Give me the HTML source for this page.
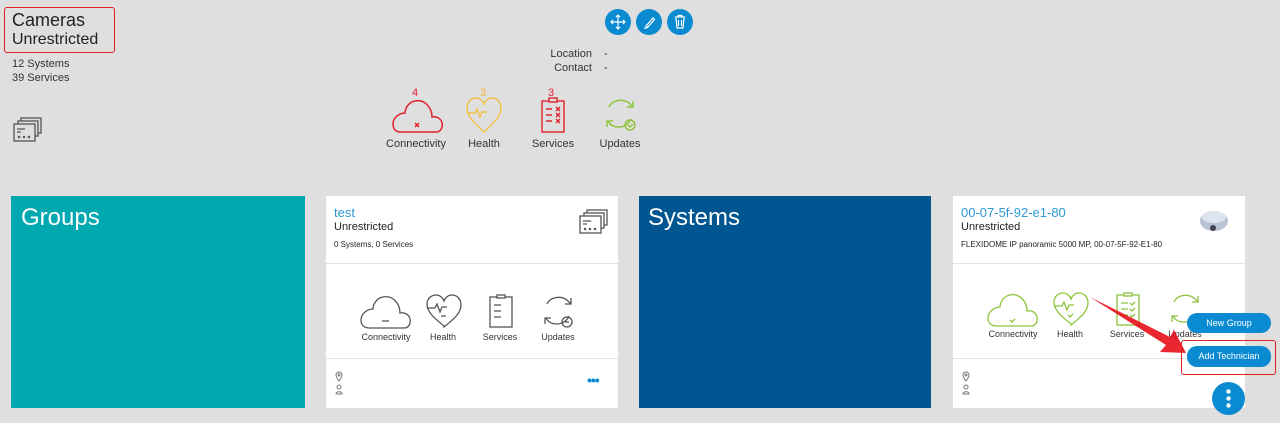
<!DOCTYPE html>
<html><head><meta charset="utf-8"><style>
*{margin:0;padding:0;box-sizing:border-box}
body{width:1280px;height:423px;background:#dfdfdf;font-family:"Liberation Sans",sans-serif;position:relative;overflow:hidden;color:#222}
.a{position:absolute}
.card{position:absolute;top:196px;height:212px;background:#fff}
.lbl{position:absolute;font-size:10px;color:#333;text-align:center;width:80px}
.btn{position:absolute;border-radius:50%;background:#0a8bd1;width:26px;height:26px;top:9px}
.hr{position:absolute;left:0;right:0;height:1px;background:#e2e2e2}
</style></head><body>
<div class="a" style="left:4px;top:7px;width:111px;height:46px;border:1.5px solid #e02020;border-radius:3px"></div>
<div class="a" style="left:12px;top:10px;font-size:18px;color:#222">Cameras</div>
<div class="a" style="left:12px;top:31px;font-size:16px;color:#222">Unrestricted</div>
<div class="a" style="left:12px;top:57px;font-size:11px;line-height:14px;color:#333">12 Systems<br>39 Services</div>
<svg class="a" style="left:13px;top:117px" width="30" height="26" viewBox="0 0 30 26" fill="none" stroke="#555" stroke-width="1.3"><rect x="8" y="1" width="20" height="15"/><rect x="5" y="4" width="20" height="15" fill="#dfdfdf"/><rect x="1" y="7" width="21" height="17" fill="#dfdfdf"/><path d="M4 12h8M4 15h4"/><circle cx="6" cy="20" r=".6"/><circle cx="11" cy="20" r=".6"/><circle cx="16" cy="20" r=".6"/></svg>

<div class="btn" style="left:605px"><svg width="26" height="26" viewBox="0 0 26 26" fill="none" stroke="#fff" stroke-width="1.2"><path d="M13 6v14M6 13h14M11 8l2-2 2 2M11 18l2 2 2-2M8 11l-2 2 2 2M18 11l2 2-2 2"/></svg></div>
<div class="btn" style="left:636px"><svg width="26" height="26" viewBox="0 0 26 26" fill="none" stroke="#fff" stroke-width="1.2"><path d="M10 17l7-8 1.5 1.5-7 8zM8 19h3"/></svg></div>
<div class="btn" style="left:667px"><svg width="26" height="26" viewBox="0 0 26 26" fill="none" stroke="#fff" stroke-width="1.2"><path d="M8 8h10M11 8V6.5h4V8M9 9l1 10h6l1-10M11.5 11v6M14.5 11v6"/></svg></div>

<div class="a" style="left:520px;top:47px;width:72px;text-align:right;font-size:11px;line-height:14px;color:#333">Location<br>Contact</div>
<div class="a" style="left:604px;top:47px;font-size:11px;line-height:14px;color:#333">-<br>-</div>

<div class="a" style="left:412px;top:87px;font-size:11px;color:#e0202c">4</div>
<svg class="a" style="left:390px;top:97px" width="54" height="37" viewBox="0 0 54 37" fill="none" stroke="#e0202c" stroke-width="1.5"><path d="M10 35h36c5 0 7-5 6-9-1-5-6-7-10-6 0-10-8-18-17-16-6 1-10 7-10 12-6 0-12 5-12 11 0 5 3 8 7 8z"/><path d="M25 26l4 4M29 26l-4 4"/></svg>
<div class="lbl" style="left:376px;top:138px;font-size:11px">Connectivity</div>

<div class="a" style="left:480px;top:87px;font-size:11px;color:#f0b93a">3</div>
<svg class="a" style="left:466px;top:97px" width="36" height="38" viewBox="0 0 36 38" fill="none" stroke="#f0c040" stroke-width="1.4"><path d="M18 35C8 26 1 19 1 11 1 5 5 1 10 1c4 0 7 3 8 6 1-3 4-6 8-6 5 0 9 4 9 10 0 8-7 15-17 24z"/><path d="M1 16h8l2-4 3 8 2-5h5"/></svg>
<div class="lbl" style="left:444px;top:138px;font-size:11px">Health</div>

<div class="a" style="left:548px;top:87px;font-size:11px;color:#e0202c">3</div>
<svg class="a" style="left:540px;top:97px" width="26" height="36" viewBox="0 0 26 36" fill="none" stroke="#e0202c" stroke-width="1.4"><rect x="2" y="4" width="22" height="31"/><rect x="9" y="1" width="8" height="4" fill="#dfdfdf"/><path d="M6 12h6M6 18h6M6 24h6M16 10l4 4M20 10l-4 4M16 16l4 4M20 16l-4 4M16 22l4 4M20 22l-4 4"/></svg>
<div class="lbl" style="left:513px;top:138px;font-size:11px">Services</div>

<svg class="a" style="left:602px;top:97px" width="36" height="36" viewBox="0 0 36 36" fill="none" stroke="#8cc43c" stroke-width="1.4"><path d="M7 10c4-8 16-9 22-2l2 2M31 4v6h-6M29 22c-2 5-7 8-12 8-5 0-9-2-11-6M5 30v-6h6"/><circle cx="28" cy="28" r="5"/><path d="M26 28l2 2 3-3"/></svg>
<div class="lbl" style="left:580px;top:138px;font-size:11px">Updates</div>

<div class="card" style="left:11px;width:294px;background:#00a8b0"><div class="a" style="left:10px;top:8px;font-size:24px;color:#fff">Groups</div></div>
<div class="card" style="left:639px;width:292px;background:#005691"><div class="a" style="left:9px;top:8px;font-size:24px;color:#fff">Systems</div></div>

<div class="card" style="left:326px;width:292px">
 <div class="a" style="left:8px;top:9px;font-size:13px;color:#2f9ad6">test</div>
 <div class="a" style="left:8px;top:25px;font-size:11px;color:#222">Unrestricted</div>
 <div class="a" style="left:8px;top:44px;font-size:8px;color:#222">0 Systems, 0 Services</div>
 <svg class="a" style="left:253px;top:13px" width="30" height="26" viewBox="0 0 30 26" fill="none" stroke="#555" stroke-width="1.3"><rect x="8" y="1" width="20" height="15"/><rect x="5" y="4" width="20" height="15" fill="#fff"/><rect x="1" y="7" width="21" height="17" fill="#fff"/><path d="M4 12h8M4 15h4"/><circle cx="6" cy="20" r=".6"/><circle cx="11" cy="20" r=".6"/><circle cx="16" cy="20" r=".6"/></svg>
 <div class="hr" style="top:67px"></div>
 <svg class="a" style="left:34px;top:98px" width="52" height="36" viewBox="0 0 52 36" fill="none" stroke="#555" stroke-width="1.3"><path d="M10 34h34c5 0 7-5 6-9-1-5-6-7-10-6 0-10-8-18-17-16-6 1-10 7-10 12-6 0-12 5-12 11 0 5 3 8 9 8z"/><path d="M22 27h7"/></svg>
 <div class="lbl" style="left:20px;top:136px;font-size:9px">Connectivity</div>
 <svg class="a" style="left:100px;top:98px" width="36" height="34" viewBox="0 0 36 34" fill="none" stroke="#555" stroke-width="1.3"><path d="M18 32C8 24 1 18 1 10 1 5 5 1 10 1c4 0 7 3 8 6 1-3 4-6 8-6 5 0 9 4 9 10 0 8-7 14-17 22z"/><path d="M1 14h8l2-4 3 8 2-5h5M15 22h5"/></svg>
 <div class="lbl" style="left:77px;top:136px;font-size:9px">Health</div>
 <svg class="a" style="left:162px;top:98px" width="26" height="34" viewBox="0 0 26 34" fill="none" stroke="#555" stroke-width="1.3"><rect x="2" y="3" width="22" height="30"/><rect x="9" y="1" width="8" height="3" fill="#fff"/><path d="M6 11h7M6 17h7M6 23h7"/></svg>
 <div class="lbl" style="left:134px;top:136px;font-size:9px">Services</div>
 <svg class="a" style="left:214px;top:98px" width="36" height="36" viewBox="0 0 36 36" fill="none" stroke="#555" stroke-width="1.3"><path d="M7 10c4-8 16-9 22-2l2 2M31 4v6h-6M29 22c-2 5-7 8-12 8-5 0-9-2-11-6M5 30v-6h6"/><circle cx="27" cy="28" r="5"/><path d="M25 28h4"/></svg>
 <div class="lbl" style="left:192px;top:136px;font-size:9px">Updates</div>
 <div class="hr" style="top:162px"></div>
 <svg class="a" style="left:9px;top:175px" width="8" height="24" viewBox="0 0 8 24" fill="none" stroke="#777" stroke-width="1"><path d="M4 10C1 6 1 5 1 4a3 3 0 016 0c0 1 0 2-3 6z"/><circle cx="4" cy="4" r="1"/><circle cx="4" cy="16" r="2"/><path d="M1 23c0-3 6-3 6 0z"/></svg>
 <div class="a" style="left:261px;top:176px;font-size:14px;color:#0a8bd1;letter-spacing:-1px;font-weight:bold">•••</div>
</div>

<div class="card" style="left:953px;width:292px">
 <div class="a" style="left:8px;top:9px;font-size:13px;color:#2f9ad6">00-07-5f-92-e1-80</div>
 <div class="a" style="left:8px;top:25px;font-size:11px;color:#222">Unrestricted</div>
 <div class="a" style="left:8px;top:44px;font-size:8px;color:#222">FLEXIDOME IP panoramic 5000 MP, 00-07-5F-92-E1-80</div>
 <svg class="a" style="left:245px;top:12px" width="32" height="26" viewBox="0 0 32 26"><ellipse cx="16" cy="13" rx="14" ry="10" fill="#b8c4d4"/><ellipse cx="16" cy="9" rx="12" ry="6" fill="#dde4ee"/><circle cx="15" cy="20" r="3" fill="#445"/></svg>
 <div class="hr" style="top:67px"></div>
 <svg class="a" style="left:34px;top:96px" width="52" height="36" viewBox="0 0 52 36" fill="none" stroke="#8cc43c" stroke-width="1.3"><path d="M10 34h34c5 0 7-5 6-9-1-5-6-7-10-6 0-10-8-18-17-16-6 1-10 7-10 12-6 0-12 5-12 11 0 5 3 8 9 8z"/><path d="M23 28l2 2 3-3"/></svg>
 <div class="lbl" style="left:20px;top:133px;font-size:9px">Connectivity</div>
 <svg class="a" style="left:100px;top:96px" width="36" height="34" viewBox="0 0 36 34" fill="none" stroke="#8cc43c" stroke-width="1.3"><path d="M18 32C8 24 1 18 1 10 1 5 5 1 10 1c4 0 7 3 8 6 1-3 4-6 8-6 5 0 9 4 9 10 0 8-7 14-17 22z"/><path d="M1 14h8l2-4 3 8 2-5h5M15 23l2 2 3-3"/></svg>
 <div class="lbl" style="left:77px;top:133px;font-size:9px">Health</div>
 <svg class="a" style="left:162px;top:96px" width="26" height="34" viewBox="0 0 26 34" fill="none" stroke="#8cc43c" stroke-width="1.3"><rect x="2" y="3" width="22" height="30"/><rect x="9" y="1" width="8" height="3" fill="#fff"/><path d="M6 11h7M6 17h7M6 23h7M15 11l2 2 3-3M15 17l2 2 3-3M15 23l2 2 3-3"/></svg>
 <div class="lbl" style="left:134px;top:133px;font-size:9px">Services</div>
 <svg class="a" style="left:214px;top:96px" width="36" height="36" viewBox="0 0 36 36" fill="none" stroke="#8cc43c" stroke-width="1.3"><path d="M7 10c4-8 16-9 22-2l2 2M31 4v6h-6M29 22c-2 5-7 8-12 8-5 0-9-2-11-6M5 30v-6h6"/></svg>
 <div class="lbl" style="left:192px;top:133px;font-size:9px">Updates</div>
 <div class="hr" style="top:162px"></div>
 <svg class="a" style="left:9px;top:175px" width="8" height="24" viewBox="0 0 8 24" fill="none" stroke="#777" stroke-width="1"><path d="M4 10C1 6 1 5 1 4a3 3 0 016 0c0 1 0 2-3 6z"/><circle cx="4" cy="4" r="1"/><circle cx="4" cy="16" r="2"/><path d="M1 23c0-3 6-3 6 0z"/></svg>
</div>

<svg class="a" style="left:1090px;top:297px" width="100" height="60" viewBox="0 0 100 60"><path d="M0 0L80 40L84 33L96 56L70 55L76 48Z" fill="#e8101a" opacity=".9"/></svg>

<div class="a" style="left:1187px;top:313px;width:84px;height:20px;border-radius:10px;background:#0a8bd1;color:#fff;font-size:9px;text-align:center;line-height:20px">New Group</div>
<div class="a" style="left:1181px;top:340px;width:95px;height:35px;border:1.5px solid #e02020;border-radius:3px"></div>
<div class="a" style="left:1187px;top:346px;width:84px;height:21px;border-radius:10px;background:#0a8bd1;color:#fff;font-size:9px;text-align:center;line-height:21px">Add Technician</div>
<div class="a" style="left:1212px;top:382px;width:33px;height:33px;border-radius:50%;background:#0a8bd1"><svg width="33" height="33"><circle cx="16.5" cy="9.5" r="2.2" fill="#fff"/><circle cx="16.5" cy="16.5" r="2.2" fill="#fff"/><circle cx="16.5" cy="23.5" r="2.2" fill="#fff"/></svg></div>
</body></html>
